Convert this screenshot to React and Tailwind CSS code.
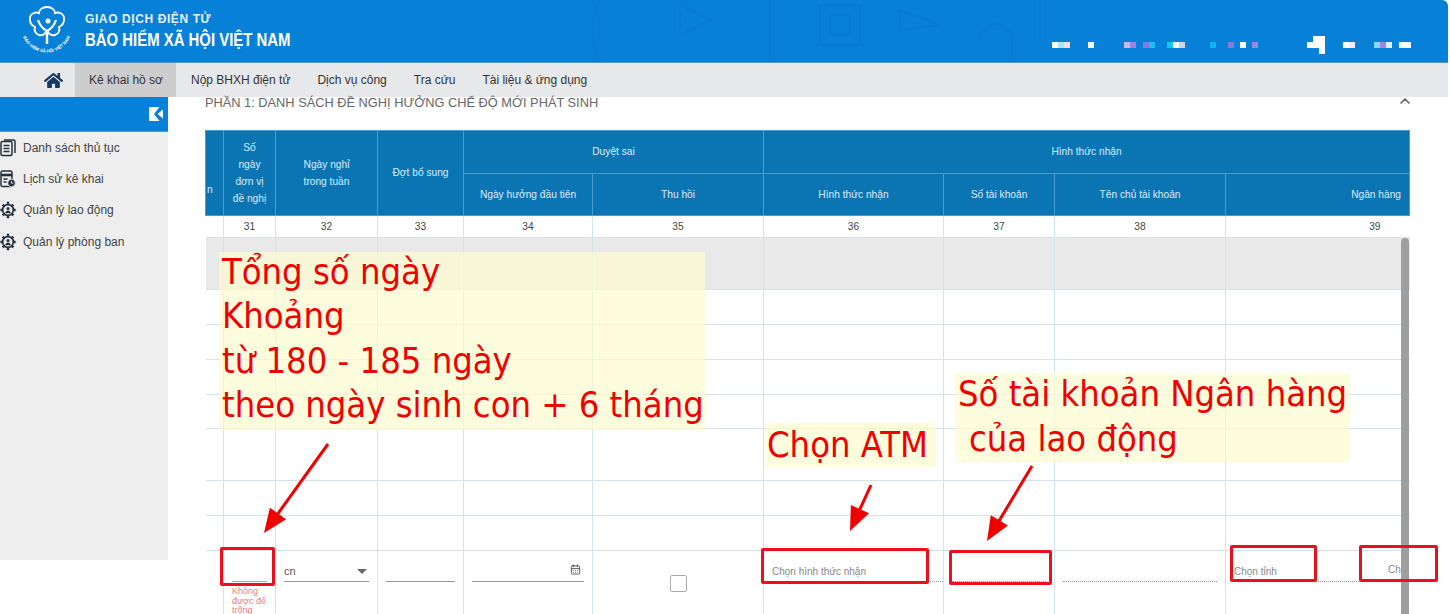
import React from 'react';
import { ChevronUp, CalendarDays } from 'lucide-react';
import { FaHome } from 'react-icons/fa';

const Logo = () => (
  <svg width="54" height="52" viewBox="20 4 54 52" fill="none" stroke="#fff">
    <path d="M47 7C52 7 55 10 55 13C60 11 65 15 64 20C64 24 61 26 59 27C60 30 59 34 55 35C52 36 49 34 48 32L46 32C45 34 42 36 39 35C35 34 34 30 35 27C33 26 30 24 30 20C29 15 34 11 39 13C39 10 42 7 47 7Z" strokeWidth="1.9" />
    <path d="M38 20C40 26 43 29 47 31C51 29 54 26 56 20" strokeWidth="2.2" />
    <path d="M47 30V44" strokeWidth="2.4" />
    <circle cx="48" cy="21" r="2.5" fill="#fff" stroke="none" />
    <path id="logo-arc" d="M21 27A25.5 25.5 0 0 0 72 27" stroke="none" />
    <text fill="#fff" stroke="none" fontSize="4.3" fontWeight="700" textAnchor="middle" fontFamily="Liberation Sans, sans-serif">
      <textPath href="#logo-arc" startOffset="50%">BẢO HIỂM XÃ HỘI VIỆT NAM</textPath>
    </text>
  </svg>
);

const Pixels = ({ items, className = '' }) => (
  <div className={`flex h-[6px] ${className}`}>
    {items.map((c, i) => (
      <span key={i} className="w-[6px] h-[6px]" style={{ backgroundColor: c }} />
    ))}
  </div>
);

const SideIcon = ({ type }) => (
  <svg width="16" height="18" viewBox="0 0 16 18" fill="none" stroke="#24303c" strokeWidth="1.5">
    {type === 'list' && (
      <>
        <rect x="1" y="2.5" width="11" height="14" rx="1.5" />
        <path d="M4 1h9.5a1.5 1.5 0 0 1 1.5 1.5V14" />
        <path d="M3.5 6.5h6M3.5 9.5h6M3.5 12.5h6" />
      </>
    )}
    {type === 'history' && (
      <>
        <rect x="1" y="1" width="11" height="15.5" rx="1.5" />
        <path d="M1 5h11" strokeWidth="2.6" />
        <path d="M3.5 9h4M3.5 12h3" />
        <circle cx="11.5" cy="13" r="3.8" fill="#24303c" stroke="#eeeeee" strokeWidth="0.8" />
        <path d="M11.5 11v2.2h1.8" stroke="#fff" strokeWidth="0.8" />
      </>
    )}
    {(type === 'staff' || type === 'dept') && (
      <>
        <circle cx="8" cy="9" r="5.4" strokeWidth="1.7" />
        <path d="M8 .8v2.6M8 14.6v2.6M.4 9H3M13 9h2.6M2.6 3.6l1.9 1.9M11.5 12.5l1.9 1.9M13.4 3.6l-1.9 1.9M4.5 12.5l-1.9 1.9" strokeWidth="2.4" />
        <circle cx="8" cy="7.6" r="1.5" fill="#24303c" stroke="none" />
        <path d="M5.2 12.2c.3-2 1.4-2.8 2.8-2.8s2.5.8 2.8 2.8z" fill="#24303c" stroke="none" />
      </>
    )}
  </svg>
);

const Arrow = ({ className, x1, y1, x2, y2, w, h }) => {
  // mui ten do ve tren anh chup
  const a = Math.atan2(y2 - y1, x2 - x1);
  const p = (d, o) => `${x2 - d * Math.cos(a) - o * Math.sin(a)},${y2 - d * Math.sin(a) + o * Math.cos(a)}`;
  return (
    <svg className={className} width={w} height={h} viewBox={`0 0 ${w} ${h}`}>
      <line x1={x1} y1={y1} x2={x2 - 16 * Math.cos(a)} y2={y2 - 16 * Math.sin(a)} stroke="#f00000" strokeWidth="3" />
      <polygon points={`${x2},${y2} ${p(24, 10)} ${p(24, -10)}`} fill="#f00000" />
    </svg>
  );
};

const cols = ['w-[18px]', 'w-[52px]', 'w-[102px]', 'w-[86px]', 'w-[129px]', 'w-[171px]', 'w-[180px]', 'w-[111px]', 'w-[171px]', 'w-[184px]'];
const rowHeights = ['h-[52px]', 'h-[35px]', 'h-[35px]', 'h-[35px]', 'h-[34px]', 'h-[52px]', 'h-[35px]', 'h-[35px]'];
const th = 'border border-[#4b9fd0] font-normal text-center align-middle px-1';
const td = 'border-x border-[#cfe3f0] border-b border-b-[#d5e2ec] first:border-l-0 last:border-r-0';
const noteText = "text-[#f00000] font-['DejaVu_Sans_Condensed','Open_Sans',sans-serif] whitespace-nowrap";

const Box = ({ className }) => <div className={`absolute border-[3px] border-[#ee0f1c] rounded-[2px] ${className}`} />;

export default function App() {
  return (
    <div className="h-[614px] w-[1450px] overflow-hidden bg-white text-[#444] relative font-['Liberation_Sans',Arial,sans-serif]">
      <header className="relative h-[63px] w-[1448px] bg-[#0780d7] border-b border-[#5f93b8] rounded-tr-[6px] flex items-start justify-between overflow-hidden">
        <svg className="absolute left-[560px] top-0 opacity-[0.04]" width="520" height="62" viewBox="0 0 520 62" fill="none" stroke="#003a6e" strokeWidth="1.5">
          <path d="M40 0c-10 20-10 40 0 62M120 5l30 15-30 15zM210 0v62M260 5h40v40h-40zM270 15h20v20h-20zM340 10l40 15-40 5zM420 40a16 16 0 0 1 32 0v22M480 0v40" />
        </svg>
        <div className="relative flex items-start pl-[20px] pt-[4px]">
          <Logo />
          <div className="ml-[11px] pt-[7px] text-white">
            <div className="text-[12px] font-bold tracking-[0.6px] leading-[16px] text-[#e4f0fa]">GIAO DỊCH ĐIỆN TỬ</div>
            <div className="text-[19px] font-bold leading-[24px] mt-[1px] scale-x-[0.785] origin-left whitespace-nowrap">BẢO HIỂM XÃ HỘI VIỆT NAM</div>
          </div>
        </div>
        <div className="relative flex items-center h-[18px] mt-[36px] pr-[37px]">
          <Pixels items={['#fff', '#a9e6f7', '#f3dfe9']} />
          <Pixels items={['#fff']} className="ml-[18px]" />
          <Pixels items={['#c5b9e6', '#9b83d8']} className="ml-[30px]" />
          <Pixels items={['#8c78dc', '#1cc0f4']} className="ml-[7px]" />
          <Pixels items={['#12c6f8', '#fff', '#d9d0e4']} className="ml-[12px]" />
          <Pixels items={['#12b4f0']} className="ml-[25px]" />
          <Pixels items={['#8c78dc']} className="ml-[12px]" />
          <Pixels items={['#fff']} className="ml-[6px]" />
          <Pixels items={['#a184e0']} className="ml-[6px]" />
          <svg className="ml-[49px]" width="18" height="18" viewBox="0 0 18 18"><path d="M6 0h12v18h-6v-6H0V6h6z" fill="#fff" /></svg>
          <Pixels items={['#fff', '#f1ebfa']} className="ml-[18px]" />
          <Pixels items={['#86d9f7', '#a184e0', '#d6f4fd']} className="ml-[19px]" />
          <Pixels items={['#fff', '#fff']} className="ml-[7px]" />
        </div>
      </header>

      <nav className="h-[34px] w-[1448px] bg-[#e7e8e9] flex items-stretch text-[12px] text-[#333] pl-[39px]">
        <div className="w-[36px] flex items-center justify-start pl-[5px]">
          <FaHome size={19} color="#123a63" />
        </div>
        <div className="w-[101px] bg-[#cdcdcd] flex items-center justify-center pl-[1px]">Kê khai hồ sơ</div>
        <div className="flex items-center pl-[15px]">Nộp BHXH điện tử</div>
        <div className="flex items-center pl-[27px]">Dịch vụ công</div>
        <div className="flex items-center pl-[27px]">Tra cứu</div>
        <div className="flex items-center pl-[27px]">Tài liệu &amp; ứng dụng</div>
      </nav>

      <div className="flex items-start h-[517px]">
        <aside className="w-[168px] shrink-0 h-[463px] bg-[#eeeeee]">
          <div className="h-[35px] bg-[#0780d7] border-b border-[#3aa0e6] flex items-center justify-end pr-[5px]">
            <svg width="14" height="14" viewBox="0 0 14 14" fill="#fff">
              <path d="M0 1a1 1 0 0 1 1-1h9.5L5 7l5.5 7H1a1 1 0 0 1-1-1z" />
              <path d="M14 2.5v9L8.5 7z" />
            </svg>
          </div>
          <ul className="text-[12px] text-[#444]">
            {[['Danh sách thủ tục', 'list'], ['Lịch sử kê khai', 'history'], ['Quản lý lao động', 'staff'], ['Quản lý phòng ban', 'dept']].map(([label, type]) => (
              <li key={label} className="h-[31.3px] flex items-center gap-[7px]">
                <SideIcon type={type} />
                <span>{label}</span>
              </li>
            ))}
          </ul>
        </aside>

        <main className="flex-1 pl-[37px] min-w-0">
          <div className="h-[33px] w-[1204px] flex items-start justify-between text-[12.8px] text-[#666] leading-[12px]">
            <span>PHẦN 1: DANH SÁCH ĐỀ NGHỊ HƯỞNG CHẾ ĐỘ MỚI PHÁT SINH</span>
            <ChevronUp size={16} stroke="#666" strokeWidth={2.5} className="-mt-[4px] -mr-[4px]" />
          </div>
          <table className="table-fixed w-[1204px] border-collapse text-[10.2px]">
            <colgroup>
              {cols.map((c, i) => <col key={i} className={c} />)}
            </colgroup>
            <thead className="bg-[#0b75b4] text-[#dcecf7]">
              <tr className="h-[43px]">
                <th rowSpan={2} className={`${th} text-left px-0 pl-[1px] pt-[34px]`}>n</th>
                <th rowSpan={2} className={`${th} leading-[17px] px-0`}>Số<br />ngày<br />đơn vị<br />đề nghị</th>
                <th rowSpan={2} className={`${th} leading-[17px] px-[20px]`}>Ngày nghỉ trong tuần</th>
                <th rowSpan={2} className={th}>Đợt bổ sung</th>
                <th colSpan={2} className={th}>Duyệt sai</th>
                <th colSpan={4} className={th}>Hình thức nhận</th>
              </tr>
              <tr className="h-[42px]">
                <th className={th}>Ngày hưởng đầu tiên</th>
                <th className={th}>Thu hồi</th>
                <th className={th}>Hình thức nhận</th>
                <th className={th}>Số tài khoản</th>
                <th className={th}>Tên chủ tài khoản</th>
                <th className={`${th} text-right pr-[8px]`}>Ngân hàng</th>
              </tr>
            </thead>
            <tbody>
              <tr className="h-[22px] text-[#444]">
                <td className={td}></td>
                {[31, 32, 33, 34, 35, 36, 37, 38].map((n) => (
                  <td key={n} className={`${td} text-center`}>{n}</td>
                ))}
                <td className={`${td} text-right pr-[29px]`}>39</td>
              </tr>
              {rowHeights.map((h, r) => (
                <tr key={r} className={`${h} ${r === 0 ? 'bg-[#e9e9e9]' : ''}`}>
                  {cols.map((c, i) => <td key={i} className={td}></td>)}
                </tr>
              ))}
              <tr className="h-[64px]">
                <td className={td}></td>
                <td className={`${td} align-top pt-[30px] px-[8px]`}>
                  <div className="border-b border-[#f08a8a] h-px" />
                  <div className="text-[9px] leading-[9.5px] text-[#f4787c] mt-[5px] -mr-[6px]">Không<br />được để<br />trống</div>
                </td>
                <td className={`${td} align-top pt-[13px] px-[8px]`}>
                  <div className="flex items-center justify-between border-b border-[#999] h-[18px] text-[11px] text-[#555] pb-[3px]">
                    <span>cn</span>
                    <span className="w-0 h-0 mr-[2px] border-x-[5px] border-x-transparent border-t-[5px] border-t-[#666]" />
                  </div>
                </td>
                <td className={`${td} align-top pt-[13px] px-[8px]`}>
                  <div className="border-b border-[#999] h-[18px]" />
                </td>
                <td className={`${td} align-top pt-[13px] px-[8px]`}>
                  <div className="flex justify-end border-b border-[#999] h-[18px] pr-[3px]">
                    <CalendarDays size={11} stroke="#555" strokeWidth={2} />
                  </div>
                </td>
                <td className={`${td} align-top pt-[24px] text-center`}>
                  <span className="inline-block w-[17px] h-[17px] border border-[#aaa] rounded-[2px]" />
                </td>
                <td className={`${td} align-top pt-[13px] pl-[8px]`}>
                  <div className="border-b border-dotted border-[#999] h-[18px] text-[10px] text-[#888] leading-[15px]">Chọn hình thức nhận</div>
                </td>
                <td className={`${td} align-top pt-[13px] px-[8px]`}>
                  <div className="border-b border-dotted border-[#999] h-[18px]" />
                </td>
                <td className={`${td} align-top pt-[13px] px-[8px]`}>
                  <div className="border-b border-dotted border-[#999] h-[18px]" />
                </td>
                <td className={`${td} align-top pt-[13px] pl-[8px]`}>
                  <div className="border-b border-dotted border-[#999] h-[18px] text-[10px] text-[#888] leading-[15px] w-[125px]">Chọn tỉnh</div>
                </td>
              </tr>
            </tbody>
          </table>
        </main>
      </div>

      {/* scrollbar + chu thich do de len tren bang */}
      <span className="absolute left-[1388px] top-[563px] text-[10px] text-[#888] leading-[14px]">Ch</span>
      <div className="absolute left-[1401px] top-[238px] w-[8px] h-[376px] bg-[#9f9f9f] rounded-t-[4px]" />

      <div className={`absolute left-[219px] top-[252px] w-[486px] h-[178px] bg-[#fcfbcf]/70 pl-[3px] text-[36px] leading-[44.3px] ${noteText}`}>
        <div className="-translate-y-[2px]">
          <div>Tổng số ngày</div>
          <div>Khoảng</div>
          <div>từ 180 - 185 ngày</div>
          <div>theo ngày sinh con + 6 tháng</div>
        </div>
      </div>
      <div className={`absolute left-[765px] top-[423px] w-[171px] h-[44px] bg-[#fcfbcf]/70 pl-[2px] text-[36px] leading-[44px] ${noteText}`}>
        <div>Chọn ATM</div>
      </div>
      <div className={`absolute left-[955px] top-[373px] w-[395px] h-[89px] bg-[#fcfbcf]/70 pl-[3px] text-[36px] leading-[45px] ${noteText}`}>
        <div className="-translate-y-[2px]">
          <div>Số tài khoản Ngân hàng</div>
          <div className="pl-[11px]">của lao động</div>
        </div>
      </div>

      <Arrow className="absolute left-[255px] top-[440px]" w={80} h={100} x1={73} y1={4} x2={9} y2={93} />
      <Arrow className="absolute left-[840px] top-[480px]" w={40} h={52} x1={31} y1={5} x2={10} y2={51} />
      <Arrow className="absolute left-[980px] top-[460px]" w={60} h={84} x1={52} y1={6} x2={7} y2={81} />

      <Box className="left-[220px] top-[547px] w-[55px] h-[39px]" />
      <Box className="left-[761px] top-[548px] w-[168px] h-[36px]" />
      <Box className="left-[949px] top-[550px] w-[103px] h-[35px]" />
      <Box className="left-[1230px] top-[545px] w-[87px] h-[37px]" />
      <Box className="left-[1359px] top-[545px] w-[79px] h-[37px]" />
    </div>
  );
}
